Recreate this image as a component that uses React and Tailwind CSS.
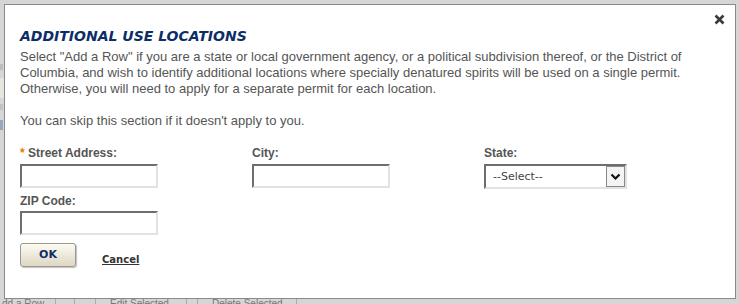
import React from "react";

const Label = ({ children, required }) => (
  <div className="h-[14px] text-[12px] leading-[14px] font-bold text-[#555]">
    {required && <span className="text-[#e07b00]">* </span>}
    {children}
  </div>
);

const TextBox = () => (
  <input
    type="text"
    className="block w-[138px] h-[24px] bg-white border-2 border-t-[#6e6e6e] border-l-[#6e6e6e] border-b-[#e2e2e2] border-r-[#e2e2e2] outline-none px-1 text-[12px]"
  />
);

const SelectBox = () => (
  <div className="flex w-[143px] h-[25px] bg-white border-2 border-t-[#6e6e6e] border-l-[#6e6e6e] border-b-[#e2e2e2] border-r-[#e2e2e2]">
    <div className="flex-1 pl-[7px] text-[11px] leading-[21px] text-[#444] font-['DejaVu_Sans',sans-serif]">
      --Select--
    </div>
    <div className="w-[19px] h-[21px] flex items-center justify-center bg-[#f4f4f4] border border-[#8a8a8a]">
      <svg width="11" height="8" viewBox="0 0 11 8">
        <path d="M1.5 1.5 L5.5 5.5 L9.5 1.5" fill="none" stroke="#111" strokeWidth="2.2" />
      </svg>
    </div>
  </div>
);

export default function App() {
  return (
    <div className="w-[739px] h-[304px] bg-[#d6d6d6] overflow-hidden font-['Liberation_Sans',Arial,sans-serif]">
      <div className="flex">
        <div className="w-[4px] flex flex-col overflow-hidden">
          <div className="h-[64px]" />
          <div className="h-[6px] w-[3px] bg-[#bdbdbd]" />
          <div className="h-[20px] bg-[#e6e6df] mt-[8px]" />
          <div className="mt-[6px] h-[6px] w-[3px] bg-[#c2c2c2]" />
          <div className="mt-[10px] h-[10px] w-[3px] bg-[#9aa6bf]" />
        </div>
        <div className="mt-[4px] w-[732px] h-[295px] bg-white border border-[#8a8a8a] relative pl-[15px] pt-[23px]">
          <button className="absolute right-[10px] top-[8px] w-[12px] h-[12px] flex items-center justify-center">
            <svg width="11" height="11" viewBox="0 0 11 11">
              <path d="M1.5 1.5 L9.5 9.5 M9.5 1.5 L1.5 9.5" stroke="#3a3a3a" strokeWidth="2.6" />
            </svg>
          </button>
          <h2 className="text-[14px] leading-[17px] font-bold italic text-[#0c2d66] font-['DejaVu_Sans',Verdana,sans-serif]">
            ADDITIONAL USE LOCATIONS
          </h2>
          <p className="mt-[4px] w-[700px] text-[13px] leading-[16px] text-[#555]">
            Select "Add a Row" if you are a state or local government agency, or a political subdivision thereof, or the District of Columbia, and wish to identify additional locations where specially denatured spirits will be used on a single permit. Otherwise, you will need to apply for a separate permit for each location.
            <br />
            <br />
            You can skip this section if it doesn't apply to you.
          </p>
          <div className="mt-[17px] grid grid-cols-[232px_232px_232px]">
            <div>
              <Label required>Street Address:</Label>
              <div className="mt-[4px]"><TextBox /></div>
            </div>
            <div>
              <Label>City:</Label>
              <div className="mt-[4px]"><TextBox /></div>
            </div>
            <div>
              <Label>State:</Label>
              <div className="mt-[4px]"><SelectBox /></div>
            </div>
          </div>
          <div className="mt-[5px]">
            <Label>ZIP Code:</Label>
            <div className="mt-[3px]"><TextBox /></div>
          </div>
          <div className="mt-[8px] flex items-center">
            <button className="w-[56px] h-[24px] rounded-[3px] border border-[#9c998c] bg-gradient-to-b from-[#fdfbf3] to-[#ddd7c3] shadow-[1px_1px_1px_rgba(0,0,0,0.25)] text-[11px] font-bold text-[#0c2d66] font-['DejaVu_Sans',Verdana,sans-serif]">
              OK
            </button>
            <a href="#" className="ml-[26px] mt-[8px] text-[10px] font-bold text-[#333] underline font-['DejaVu_Sans',Verdana,sans-serif]">
              Cancel
            </a>
          </div>
        </div>
      </div>
      <div className="flex h-[5px] text-[10px] leading-[10px] text-[#777] overflow-hidden">
        <div className="w-[55px] pl-[2px]">dd a Row</div>
        <div className="w-[20px] border-l border-r border-[#aaa]" />
        <div className="w-[20px]" />
        <div className="w-[92px] border-l border-r border-[#aaa] pl-[14px]">Edit Selected</div>
        <div className="w-[10px]" />
        <div className="w-[100px] border-l border-r border-[#aaa] pl-[14px]">Delete Selected</div>
      </div>
    </div>
  );
}
